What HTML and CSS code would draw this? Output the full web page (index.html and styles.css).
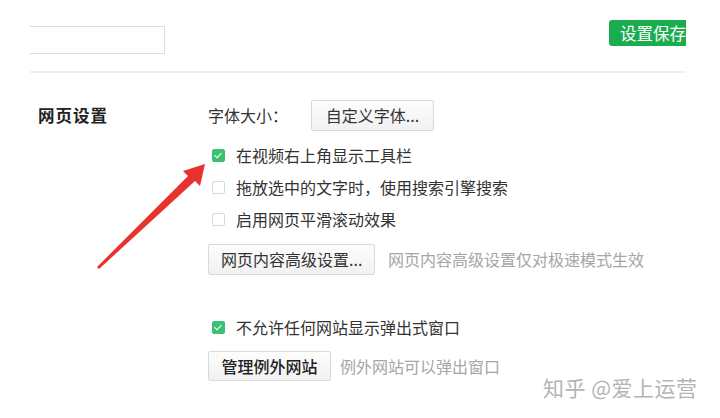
FILE: index.html
```html
<!DOCTYPE html>
<html lang="zh-CN">
<head>
    <meta charset="UTF-8">
    <meta name="viewport" content="width=device-width, initial-scale=1.0">
    <title>网页设置</title>
    <link rel="stylesheet" href="styles.css">
</head>
<body>
    <div class="frame">
        <div class="top-bar">
            <div class="search-box"></div>
            <button class="save-btn">设置保存</button>
        </div>

        <div class="section">
            <div class="section-title">网页设置</div>
            <div class="section-body">
                <div class="row first">
                    <span class="label">字体大小：</span>
                    <button class="btn font-btn">自定义字体...</button>
                </div>
                <div class="row check-row">
                    <span class="box checked"></span>
                    <span>在视频右上角显示工具栏</span>
                </div>
                <div class="row check-row">
                    <span class="box"></span>
                    <span>拖放选中的文字时，使用搜索引擎搜索</span>
                </div>
                <div class="row check-row">
                    <span class="box"></span>
                    <span>启用网页平滑滚动效果</span>
                </div>
                <div class="row btn-row">
                    <button class="btn adv-btn">网页内容高级设置...</button>
                    <span class="hint adv-hint">网页内容高级设置仅对极速模式生效</span>
                </div>

                <div class="row check-row popup-row">
                    <span class="box checked"></span>
                    <span>不允许任何网站显示弹出式窗口</span>
                </div>
                <div class="row btn-row">
                    <button class="btn site-btn">管理例外网站</button>
                    <span class="hint site-hint">例外网站可以弹出窗口</span>
                </div>
            </div>
        </div>
    </div>

    <svg class="arrow" width="720" height="418" viewBox="0 0 720 418">
        <polygon fill="#e8322e" points="97,267 188,176 183,171 205,164 200,186 195,181 99,269"/>
    </svg>

    <div class="watermark">知乎 @爱上运营</div>
</body>
</html>
```

FILE: styles.css
```css
body {
    margin: 0;
    background: #fff;
    font-family: "Noto Sans CJK SC", "Noto Sans", sans-serif;
    color: #333;
    width: 720px;
    height: 418px;
    overflow: hidden;
    position: relative;
}

.frame {
    margin-left: 30px;
    width: 656px;
    overflow: hidden;
}

.top-bar {
    display: flex;
    justify-content: space-between;
    align-items: flex-start;
    height: 71px;
    border-bottom: 2px solid #eeeeee;
}

.search-box {
    margin-top: 26px;
    width: 134px;
    height: 26px;
    border: 1px solid #dddddd;
    border-left: none;
}

.save-btn {
    flex-shrink: 0;
    margin-top: 20px;
    margin-right: -20px;
    width: 97px;
    height: 26px;
    padding: 0 0 0 11px;
    text-align: left;
    border: none;
    border-radius: 3px;
    background: #1aad4e;
    color: #fff;
    font-family: inherit;
    font-size: 16.5px;
    line-height: 26px;
    white-space: nowrap;
}

.section {
    display: flex;
    margin-top: 26px;
}

.section-title {
    width: 178px;
    padding-left: 8px;
    box-sizing: border-box;
    font-size: 16.5px;
    font-weight: bold;
    color: #222;
    line-height: 32px;
    letter-spacing: 1px;
}

.section-body {
    display: flex;
    flex-direction: column;
}

.row {
    display: flex;
    align-items: center;
    height: 32px;
    font-size: 16px;
    white-space: nowrap;
}

.row.first {
    margin-bottom: 8px;
}

.label {
    width: 103px;
}

.check-row .box {
    width: 13px;
    height: 13px;
    box-sizing: border-box;
    margin: 0 11px 0 4px;
    border: 1px solid #d6d6d6;
    border-radius: 2px;
    background: #fff;
    position: relative;
}

.check-row .box.checked {
    border-color: #3cc174;
    background: #3cc174;
}

.check-row .box.checked::after {
    content: "";
    position: absolute;
    left: 3px;
    top: 1px;
    width: 3px;
    height: 6px;
    border: solid #fff;
    border-width: 0 1.5px 1.5px 0;
    transform: rotate(45deg);
}

.btn-row {
    height: 30px;
    margin-top: 9px;
}

.btn {
    height: 31px;
    padding: 0 12px;
    border: 1px solid #d9d9d9;
    border-radius: 2px;
    background: linear-gradient(#fdfdfd, #f1f1f1);
    color: #333;
    font-family: inherit;
    font-size: 16px;
    white-space: nowrap;
}

.font-btn {
    width: 123px;
    padding: 0 12px;
}

.adv-btn {
    width: 167px;
}

.site-btn {
    width: 123px;
    height: 30px;
    color: #222;
    font-weight: 500;
}

.hint {
    color: #a6a6a6;
}

.adv-hint {
    margin-left: 13px;
}

.site-hint {
    margin-left: 9px;
}

.popup-row {
    margin-top: 37px;
}

.popup-row + .btn-row {
    margin-top: 8px;
}

.arrow {
    position: absolute;
    left: 0;
    top: 0;
    pointer-events: none;
}

.watermark {
    position: absolute;
    left: 543px;
    top: 372px;
    font-size: 21px;
    color: #b4b4b4;
    letter-spacing: 0.5px;
    white-space: nowrap;
}
```
